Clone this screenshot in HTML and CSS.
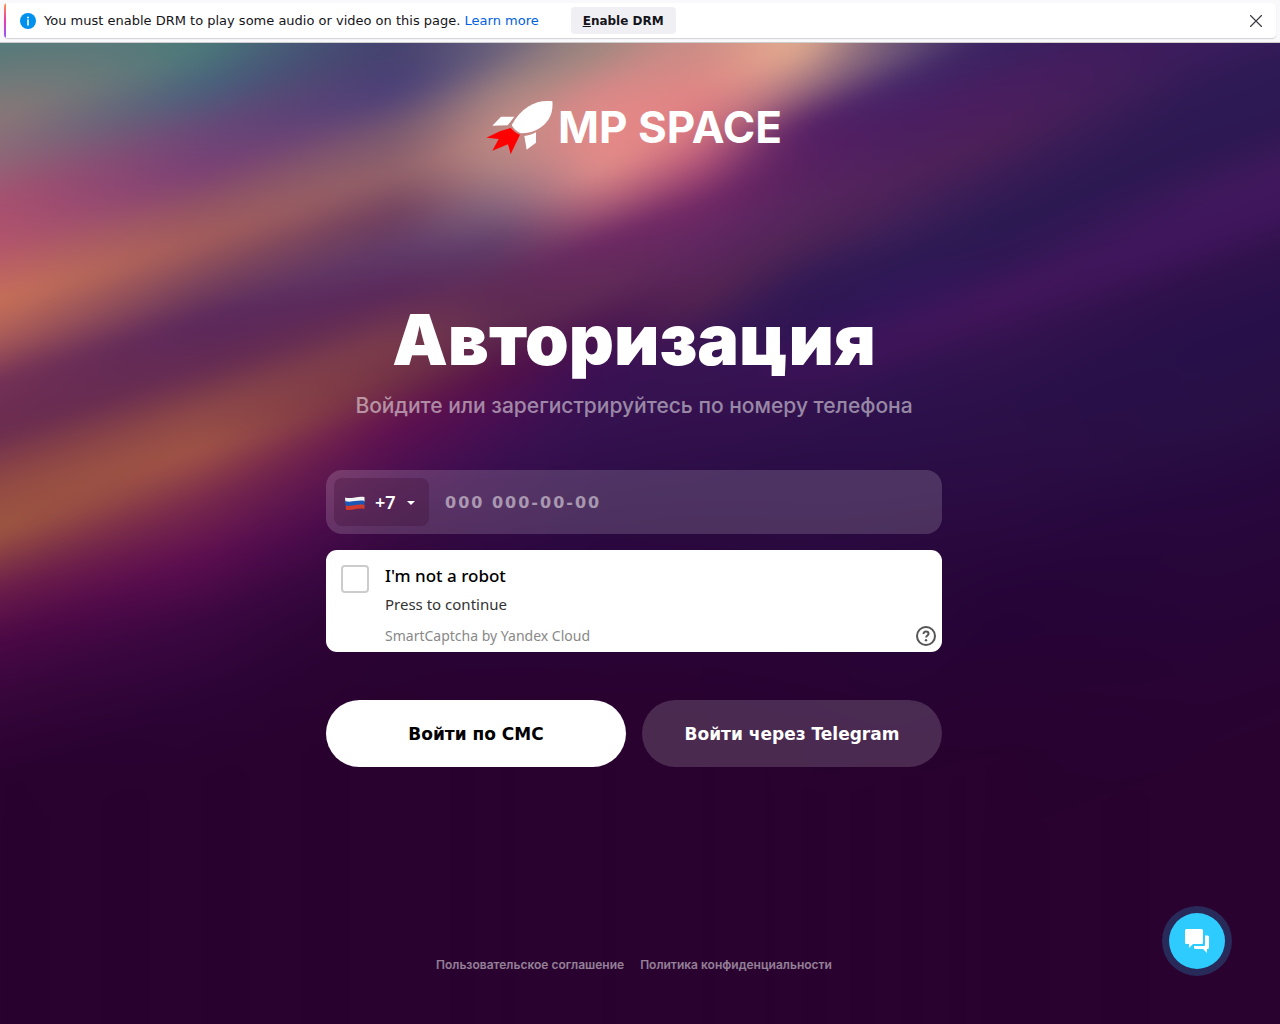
FILE: index.html
```html
<!DOCTYPE html>
<html lang="ru">
<head>
  <meta charset="UTF-8">
  <meta name="viewport" content="width=device-width, initial-scale=1.0">
  <title>MP SPACE — Авторизация</title>
  <link rel="stylesheet" href="styles.css">
</head>
<body>

  <div class="notice">
    <div class="notice-box" lang="en">
      <svg class="notice-icon" viewBox="0 0 16 16" aria-hidden="true">
        <circle cx="8" cy="8" r="8" fill="#0090ed"/>
        <path d="M8 7v5" stroke="#fff" stroke-width="1.6" stroke-linecap="round"/>
        <circle cx="8" cy="4.4" r="1" fill="#fff"/>
      </svg>
      <span>You must enable DRM to play some audio or video on this page. <a href="#">Learn more</a></span>
      <button class="notice-btn" type="button"><u>E</u>nable DRM</button>
      <button class="notice-close" type="button" aria-label="Close">
        <svg viewBox="0 0 12 12"><path d="M.5.5l11 11M11.5.5l-11 11" stroke="#3a3944" stroke-width="1.2" stroke-linecap="round"/></svg>
      </button>
    </div>
  </div>

  <div class="page">
    <!-- diagonal light streaks: each column gradient fades into the next -->
    <svg class="bg" viewBox="0 42 1280 982" preserveAspectRatio="none" aria-hidden="true">
      <defs>
        <linearGradient id="c0" gradientUnits="userSpaceOnUse" x1="0" y1="0" x2="0" y2="1000" gradientTransform="skewY(-16)">
          <stop offset=".045" stop-color="#567a7a"/><stop offset=".11" stop-color="#8a7878"/><stop offset=".15" stop-color="#8d6a78"/><stop offset=".2" stop-color="#a8506f"/><stop offset=".24" stop-color="#b2546d"/><stop offset=".3" stop-color="#c87158"/><stop offset=".34" stop-color="#a85a58"/><stop offset=".38" stop-color="#733055"/><stop offset=".43" stop-color="#6a2c50"/><stop offset=".48" stop-color="#914944"/><stop offset=".53" stop-color="#9e5740"/><stop offset=".59" stop-color="#6a1c4a"/><stop offset=".64" stop-color="#4a0845"/><stop offset=".7" stop-color="#36063a"/><stop offset=".78" stop-color="#29022f"/>
        </linearGradient>
        <linearGradient id="c1" gradientUnits="userSpaceOnUse" x1="0" y1="0" x2="0" y2="1000" gradientTransform="translate(200 0) skewY(-16)">
          <stop offset=".05" stop-color="#4a7a7b"/><stop offset=".09" stop-color="#4a607c"/><stop offset=".13" stop-color="#6a4878"/><stop offset=".17" stop-color="#7a4075"/><stop offset=".21" stop-color="#955562"/><stop offset=".24" stop-color="#a55d5a"/><stop offset=".28" stop-color="#7d455c"/><stop offset=".32" stop-color="#5a285c"/><stop offset=".37" stop-color="#662c52"/><stop offset=".41" stop-color="#8d4848"/><stop offset=".45" stop-color="#a25546"/><stop offset=".5" stop-color="#7a2a4c"/><stop offset=".56" stop-color="#5c0d50"/><stop offset=".62" stop-color="#3c0842"/><stop offset=".7" stop-color="#2c0436"/><stop offset=".78" stop-color="#29022f"/>
        </linearGradient>
        <linearGradient id="c2" gradientUnits="userSpaceOnUse" x1="0" y1="0" x2="0" y2="1000" gradientTransform="translate(400 0) skewY(-16)">
          <stop offset=".05" stop-color="#44406f"/><stop offset=".09" stop-color="#4b4078"/><stop offset=".13" stop-color="#7a5a70"/><stop offset=".17" stop-color="#92626a"/><stop offset=".21" stop-color="#70405f"/><stop offset=".25" stop-color="#5f3a68"/><stop offset=".29" stop-color="#5a285a"/><stop offset=".34" stop-color="#7b3c4b"/><stop offset=".38" stop-color="#713045"/><stop offset=".42" stop-color="#601050"/><stop offset=".47" stop-color="#4c0f50"/><stop offset=".52" stop-color="#3a0a45"/><stop offset=".6" stop-color="#2a0433"/><stop offset=".74" stop-color="#29022f"/>
        </linearGradient>
        <linearGradient id="c3" gradientUnits="userSpaceOnUse" x1="0" y1="0" x2="0" y2="1000" gradientTransform="translate(500 0) skewY(-20)">
          <stop offset=".05" stop-color="#6a627c"/><stop offset=".09" stop-color="#a58482"/><stop offset=".13" stop-color="#c48e86"/><stop offset=".17" stop-color="#b08484"/><stop offset=".2" stop-color="#8a6a80"/><stop offset=".24" stop-color="#5f3f6a"/><stop offset=".28" stop-color="#5f2c58"/><stop offset=".33" stop-color="#5c2a50"/><stop offset=".37" stop-color="#541048"/><stop offset=".41" stop-color="#4a1052"/><stop offset=".46" stop-color="#3a0f50"/><stop offset=".52" stop-color="#330a45"/><stop offset=".6" stop-color="#29043a"/><stop offset=".72" stop-color="#29022f"/>
        </linearGradient>
        <linearGradient id="c4" gradientUnits="userSpaceOnUse" x1="0" y1="0" x2="0" y2="1000" gradientTransform="translate(600 0) skewY(-22)">
          <stop offset=".05" stop-color="#a08880"/><stop offset=".09" stop-color="#d88888"/><stop offset=".13" stop-color="#e88a88"/><stop offset=".17" stop-color="#e4908a"/><stop offset=".2" stop-color="#b8687a"/><stop offset=".24" stop-color="#6c2864"/><stop offset=".29" stop-color="#602c55"/><stop offset=".33" stop-color="#481450"/><stop offset=".37" stop-color="#3a1054"/><stop offset=".43" stop-color="#34124f"/><stop offset=".52" stop-color="#2b0a42"/><stop offset=".62" stop-color="#290436"/><stop offset=".72" stop-color="#29022f"/>
        </linearGradient>
        <linearGradient id="c5" gradientUnits="userSpaceOnUse" x1="0" y1="0" x2="0" y2="1000" gradientTransform="translate(700 0) skewY(-22)">
          <stop offset=".05" stop-color="#cc8c86"/><stop offset=".09" stop-color="#e08484"/><stop offset=".13" stop-color="#d87480"/><stop offset=".16" stop-color="#b8587a"/><stop offset=".2" stop-color="#752a66"/><stop offset=".25" stop-color="#5e2660"/><stop offset=".3" stop-color="#542550"/><stop offset=".34" stop-color="#3a1654"/><stop offset=".4" stop-color="#35124f"/><stop offset=".5" stop-color="#2b0c44"/><stop offset=".62" stop-color="#290436"/><stop offset=".72" stop-color="#29022f"/>
        </linearGradient>
        <linearGradient id="c6" gradientUnits="userSpaceOnUse" x1="0" y1="0" x2="0" y2="1000" gradientTransform="translate(800 0) skewY(-22)">
          <stop offset=".05" stop-color="#e4ae90"/><stop offset=".085" stop-color="#a87882"/><stop offset=".125" stop-color="#551f65"/><stop offset=".17" stop-color="#582160"/><stop offset=".2" stop-color="#572660"/><stop offset=".24" stop-color="#4f2555"/><stop offset=".28" stop-color="#331a55"/><stop offset=".32" stop-color="#2e1652"/><stop offset=".36" stop-color="#3b1258"/><stop offset=".4" stop-color="#34124f"/><stop offset=".45" stop-color="#2c0f48"/><stop offset=".54" stop-color="#2a0a40"/><stop offset=".64" stop-color="#280436"/><stop offset=".74" stop-color="#29022f"/>
        </linearGradient>
        <linearGradient id="c7" gradientUnits="userSpaceOnUse" x1="0" y1="0" x2="0" y2="1000" gradientTransform="translate(900 0) skewY(-22)">
          <stop offset=".05" stop-color="#6a5578"/><stop offset=".08" stop-color="#45286a"/><stop offset=".12" stop-color="#4a1e62"/><stop offset=".18" stop-color="#50225a"/><stop offset=".22" stop-color="#402058"/><stop offset=".26" stop-color="#2e1a54"/><stop offset=".3" stop-color="#33165a"/><stop offset=".34" stop-color="#42155a"/><stop offset=".38" stop-color="#2f1350"/><stop offset=".45" stop-color="#2b0f48"/><stop offset=".56" stop-color="#29083c"/><stop offset=".66" stop-color="#270536"/><stop offset=".76" stop-color="#29022f"/>
        </linearGradient>
        <linearGradient id="c8" gradientUnits="userSpaceOnUse" x1="0" y1="0" x2="0" y2="1000" gradientTransform="translate(1000 0) skewY(-20)">
          <stop offset=".05" stop-color="#3a2260"/><stop offset=".09" stop-color="#4a1e60"/><stop offset=".14" stop-color="#4c2058"/><stop offset=".18" stop-color="#391c55"/><stop offset=".22" stop-color="#2c1a52"/><stop offset=".26" stop-color="#301754"/><stop offset=".3" stop-color="#44165c"/><stop offset=".34" stop-color="#34134f"/><stop offset=".4" stop-color="#2b1149"/><stop offset=".47" stop-color="#2c0d45"/><stop offset=".6" stop-color="#260438"/><stop offset=".76" stop-color="#29022f"/>
        </linearGradient>
        <linearGradient id="c9" gradientUnits="userSpaceOnUse" x1="0" y1="0" x2="0" y2="1000" gradientTransform="translate(1200 0) skewY(-20)">
          <stop offset=".05" stop-color="#3a1c5c"/><stop offset=".09" stop-color="#2e1a55"/><stop offset=".15" stop-color="#2c1852"/><stop offset=".2" stop-color="#40185c"/><stop offset=".24" stop-color="#3f155c"/><stop offset=".28" stop-color="#2f114a"/><stop offset=".34" stop-color="#27104a"/><stop offset=".42" stop-color="#281045"/><stop offset=".5" stop-color="#27083e"/><stop offset=".6" stop-color="#270538"/><stop offset=".78" stop-color="#29022f"/>
        </linearGradient>
        <linearGradient id="f1" gradientUnits="userSpaceOnUse" x1="0" x2="200" y1="0" y2="0"><stop offset="0" stop-color="#fff" stop-opacity="0"/><stop offset="1" stop-color="#fff"/></linearGradient>
        <linearGradient id="f2" href="#f1" x1="200" x2="400"/>
        <linearGradient id="f3" href="#f1" x1="400" x2="500"/>
        <linearGradient id="f4" href="#f1" x1="500" x2="600"/>
        <linearGradient id="f5" href="#f1" x1="600" x2="700"/>
        <linearGradient id="f6" href="#f1" x1="700" x2="800"/>
        <linearGradient id="f7" href="#f1" x1="800" x2="900"/>
        <linearGradient id="f8" href="#f1" x1="900" x2="1000"/>
        <linearGradient id="f9" href="#f1" x1="1000" x2="1200"/>
        <mask id="m1" maskUnits="userSpaceOnUse" x="-100" y="-60" width="1480" height="1200"><rect class="plane" fill="url(#f1)"/></mask>
        <mask id="m2" maskUnits="userSpaceOnUse" x="-100" y="-60" width="1480" height="1200"><rect class="plane" fill="url(#f2)"/></mask>
        <mask id="m3" maskUnits="userSpaceOnUse" x="-100" y="-60" width="1480" height="1200"><rect class="plane" fill="url(#f3)"/></mask>
        <mask id="m4" maskUnits="userSpaceOnUse" x="-100" y="-60" width="1480" height="1200"><rect class="plane" fill="url(#f4)"/></mask>
        <mask id="m5" maskUnits="userSpaceOnUse" x="-100" y="-60" width="1480" height="1200"><rect class="plane" fill="url(#f5)"/></mask>
        <mask id="m6" maskUnits="userSpaceOnUse" x="-100" y="-60" width="1480" height="1200"><rect class="plane" fill="url(#f6)"/></mask>
        <mask id="m7" maskUnits="userSpaceOnUse" x="-100" y="-60" width="1480" height="1200"><rect class="plane" fill="url(#f7)"/></mask>
        <mask id="m8" maskUnits="userSpaceOnUse" x="-100" y="-60" width="1480" height="1200"><rect class="plane" fill="url(#f8)"/></mask>
        <mask id="m9" maskUnits="userSpaceOnUse" x="-100" y="-60" width="1480" height="1200"><rect class="plane" fill="url(#f9)"/></mask>
        <filter id="soft" filterUnits="userSpaceOnUse" x="-100" y="-60" width="1480" height="1200" color-interpolation-filters="sRGB">
          <feGaussianBlur stdDeviation="22 7"/>
        </filter>
      </defs>
      <g filter="url(#soft)">
        <rect class="plane" fill="url(#c0)"/>
        <rect class="plane" fill="url(#c1)" mask="url(#m1)"/>
        <rect class="plane" fill="url(#c2)" mask="url(#m2)"/>
        <rect class="plane" fill="url(#c3)" mask="url(#m3)"/>
        <rect class="plane" fill="url(#c4)" mask="url(#m4)"/>
        <rect class="plane" fill="url(#c5)" mask="url(#m5)"/>
        <rect class="plane" fill="url(#c6)" mask="url(#m6)"/>
        <rect class="plane" fill="url(#c7)" mask="url(#m7)"/>
        <rect class="plane" fill="url(#c8)" mask="url(#m8)"/>
        <rect class="plane" fill="url(#c9)" mask="url(#m9)"/>
      </g>
    </svg>

    <header class="logo">
      <svg class="rocket" viewBox="45 43 204 165" aria-hidden="true">
        <path fill="#fff" d="M244 47c-48-5-90 15-122 71 5 10 14 20 28 25 40 0 66-17 83-42 10-16 13-36 11-54z"/>
        <path fill="#fff" d="M64 120l26-27h40l-20 26zM160 151c12-1 22-4 35-11v31l-28 21z"/>
        <path fill="#f00" d="M119 127l-31 9-42 20 37 4-19 35 47-19 8 30 15-32 13-27c-11-4-20-11-28-20z"/>
      </svg>
      <span class="logo-text">MP SPACE</span>
    </header>

    <main class="auth">
      <h1>Авторизация</h1>
      <p class="subtitle">Войдите или зарегистрируйтесь по номеру телефона</p>

      <form class="form">
        <div class="phone">
          <div class="country">
            <svg class="flag" viewBox="0 0 22 16" aria-hidden="true">
              <path fill="#f4f4f4" d="M1 2.500c6 2 13-2 19.500-.5v5C14 5.500 8 9 1.500 7.500z"/>
              <path fill="#1c57b5" d="M1.200 6c6 2 13-1.500 19.300 0v4.500C14 9 8 12.500 1.700 11z"/>
              <path fill="#d33a2c" d="M1.600 10.500c6 1.500 12-2 18.900-.5v4c-7-1.500-12 2-18.500.8z"/>
            </svg>
            <select aria-label="Код страны">
              <option>+7</option>
            </select>
            <svg class="caret" viewBox="0 0 8 4" aria-hidden="true"><path fill="#fff" d="M0 0h8L4 4z"/></svg>
          </div>
          <input class="phone-input" type="tel" placeholder="000 000-00-00" aria-label="Номер телефона">
        </div>

        <div class="captcha" lang="en">
          <input class="captcha-check" type="checkbox" id="robot">
          <div class="captcha-text">
            <label for="robot">I'm not a robot</label>
            <span class="captcha-hint">Press to continue</span>
            <a class="captcha-brand" href="#">SmartCaptcha by Yandex Cloud</a>
          </div>
          <button class="captcha-help" type="button" aria-label="Help">
            <svg viewBox="0 0 20 20" fill="none" stroke="#555" stroke-width="2">
              <circle cx="10" cy="10" r="9"/>
              <path d="M7.500 8c0-1.600 1-2.500 2.500-2.500s2.500 1 2.500 2.300c0 1.700-2.400 1.800-2.400 3.800"/>
              <circle cx="10" cy="14.300" r="1.200" fill="#555" stroke="none"/>
            </svg>
          </button>
        </div>

        <div class="actions">
          <button class="btn btn-light" type="submit">Войти по СМС</button>
          <button class="btn btn-glass" type="button">Войти через Telegram</button>
        </div>
      </form>
    </main>

    <footer class="links">
      <a href="#">Пользовательское соглашение</a>
      <a href="#">Политика конфиденциальности</a>
    </footer>
  </div>

  <button class="chat" type="button" aria-label="Чат">
    <svg viewBox="0 0 24 24" fill="#fff" aria-hidden="true">
      <path d="M1.500 0h15A1.500 1.500 0 0 1 18 1.500v12a1.500 1.500 0 0 1-1.500 1.500H8l-4 4v-4H1.500A1.500 1.500 0 0 1 0 13.500v-12A1.500 1.500 0 0 1 1.500 0z"/>
      <path d="M20 6.500h2.500A1.500 1.500 0 0 1 24 8v10.500a1.500 1.500 0 0 1-1.500 1.500H22v4l-4-4h-7.500A1.500 1.500 0 0 1 9 18.500V17h10a1 1 0 0 0 1-1z"/>
    </svg>
  </button>

</body>
</html>
```
FILE: styles.css
```css
* {
  box-sizing: border-box;
}

body {
  margin: 0;
  min-height: 100vh;
  display: flex;
  flex-direction: column;
  background: #29022f;
  color: #fff;
  font-family: Inter, "Liberation Sans", sans-serif;
}

button, input, select {
  font: inherit;
  border: none;
}

button {
  cursor: pointer;
}

a {
  text-decoration: none;
}

.notice {
  padding: 3px 4px;
  height: 43px;
  background: #f9f9fb;
  border-bottom: 1px solid #ccc;
  font-family: "DejaVu Sans", sans-serif;
}

.notice-box {
  display: flex;
  align-items: center;
  height: 35px;
  padding: 0 12px 0 16px;
  background: linear-gradient(#ff9640, #e53cb4, #9059ff) left / 2px 100% no-repeat #fff;
  border-radius: 4px;
  box-shadow: 0 1px 1px rgba(58, 57, 68, 0.2);
  color: #15141a;
  font-size: 13px;
}

.notice-icon {
  width: 16px;
  margin-right: 8px;
}

.notice a {
  color: #0060df;
}

.notice-btn {
  margin-left: 32px;
  width: 105px;
  height: 27px;
  padding: 0;
  background: #f0f0f4;
  border-radius: 4px;
  color: #15141a;
  font-size: 12px;
  font-weight: bold;
}

.notice-close {
  margin-left: auto;
  width: 16px;
  height: 16px;
  padding: 2px;
  background: none;
}

.notice-close svg {
  display: block;
}

.page {
  position: relative;
  flex: 1;
  display: flex;
  flex-direction: column;
  align-items: center;
  padding: 55px 12px 50px 0;
}

.bg {
  position: absolute;
  inset: 0;
  width: 100%;
  height: 100%;
  z-index: -1;
}

/* painted past the viewBox so the blur has no dark rim */
.plane {
  x: -100px;
  y: -60px;
  width: 1480px;
  height: 1200px;
}

.logo {
  display: flex;
  align-items: center;
  gap: 4px;
  height: 58px;
}

.rocket {
  width: 68px;
}

.logo-text {
  font-size: 44px;
  font-weight: 700;
}

.auth {
  width: 616px;
  max-width: 100%;
  margin-top: 144px;
  text-align: center;
}

h1 {
  margin: 0;
  font-size: 70px;
  font-weight: 900;
  line-height: 80px;
  white-space: nowrap;
}

.subtitle {
  margin: 12px 0 0;
  font-size: 21px;
  font-weight: 500;
  line-height: 28px;
  color: rgba(255, 255, 255, 0.5);
}

.form {
  margin-top: 50px;
}

.phone {
  display: flex;
  height: 64px;
  padding: 8px;
  background: rgba(255, 255, 255, 0.16);
  border-radius: 16px;
}

.country {
  position: relative;
  width: 95px;
}

.country select {
  width: 100%;
  height: 100%;
  padding: 0 0 0 41px;
  appearance: none;
  background: rgba(60, 10, 50, 0.3);
  border-radius: 8px;
  color: #fff;
  font-family: "Noto Sans", sans-serif;
  font-size: 18px;
  font-weight: 600;
}

.flag,
.caret {
  position: absolute;
  pointer-events: none;
}

.flag {
  left: 10px;
  top: 17px;
  width: 22px;
}

.caret {
  right: 14px;
  top: 23px;
  width: 8px;
}

.phone-input {
  flex: 1;
  min-width: 0;
  padding: 0 16px;
  background: none;
  outline: none;
  color: #fff;
  font-family: "DejaVu Sans", sans-serif;
  font-size: 16px;
  font-weight: bold;
  letter-spacing: 2px;
}

.phone-input::placeholder {
  color: rgba(255, 255, 255, 0.5);
}

.captcha {
  display: flex;
  gap: 16px;
  height: 102px;
  margin-top: 16px;
  padding: 15px 6px 6px 15px;
  background: #fff;
  border-radius: 11px;
  text-align: left;
  font-family: "Noto Sans", sans-serif;
}

.captcha-check {
  appearance: none;
  width: 28px;
  height: 28px;
  margin: 0;
  border: 2px solid #ccc;
  border-radius: 4px;
}

.captcha-text {
  display: flex;
  flex-direction: column;
  flex: 1;
}

.captcha-text label {
  color: #000;
  font-size: 17px;
  font-weight: 500;
  line-height: 22px;
}

.captcha-hint {
  margin-top: 7px;
  color: #333;
  font-size: 15px;
  line-height: 20px;
}

.captcha-brand {
  margin-top: 12px;
  color: #888;
  font-size: 14px;
  line-height: 20px;
}

.captcha-help {
  align-self: flex-end;
  width: 20px;
  height: 20px;
  padding: 0;
  background: none;
}

.captcha-help svg {
  display: block;
}

.actions {
  display: grid;
  grid-template-columns: 1fr 1fr;
  gap: 16px;
  margin-top: 48px;
}

.btn {
  height: 67px;
  border-radius: 34px;
  font-family: "DejaVu Sans", sans-serif;
  font-size: 17px;
  font-weight: bold;
}

.btn-light {
  background: #fff;
  color: #000;
}

.btn-glass {
  background: rgba(255, 255, 255, 0.16);
  color: #fff;
}

.links {
  display: flex;
  gap: 16px;
  margin-top: auto;
  font-size: 12px;
  font-weight: 600;
  line-height: 18px;
}

.links a {
  color: rgba(255, 255, 255, 0.5);
}

.chat {
  position: fixed;
  right: 55px;
  bottom: 55px;
  display: grid;
  place-items: center;
  width: 56px;
  height: 56px;
  padding: 0;
  background: #2ecbff;
  border-radius: 50%;
  box-shadow: 0 0 0 7px #282a5a;
}

.chat svg {
  width: 24px;
}
```
